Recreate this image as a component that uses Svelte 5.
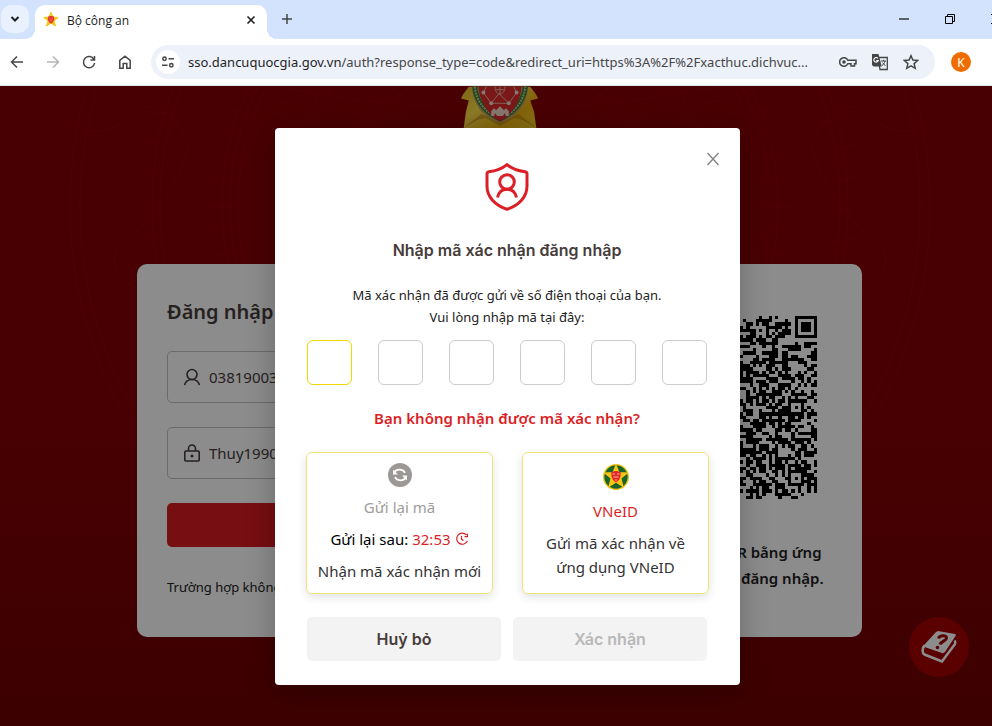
<!--
  LoginVerification — browser window showing the login page with the
  verification code dialog open on top of it.
-->
<script lang="ts">
  const URL_HOST = 'sso.dancuquocgia.gov.vn';
  const URL_PATH =
    '/auth?response_type=code&redirect_uri=https%3A%2F%2Fxacthuc.dichvuc...';
  const QR_SIZE = 57;

  let account = $state('03819003');
  let password = $state('Thuy1990');
  let code = $state(['', '', '', '', '', '']);
  let active = $state(0);

  let complete = $derived(code.every((digit) => digit !== ''));

  const rings = [150, 158, 205, 213, 262, 270, 278, 340, 348, 420, 430];
  const ticks = Array.from({ length: 72 }, (_, i) => i * 5);

  // Concentric square marker: dark border, light ring, dark core
  function marker(x: number, y: number, cx: number, cy: number, core: number) {
    const d = Math.max(Math.abs(x - cx), Math.abs(y - cy));
    if (d > core + 2) return null;
    return d <= core || d === core + 2;
  }

  function buildQr() {
    let seed = 90417;
    let path = '';
    const last = QR_SIZE - 4;
    for (let y = 0; y < QR_SIZE; y++) {
      for (let x = 0; x < QR_SIZE; x++) {
        seed = (seed * 1103515245 + 12345) % 2147483648;
        let on = (seed >> 16) % 100 < 54;
        const corner = (x < 8 || x > QR_SIZE - 9) && (y < 8 || y > QR_SIZE - 9);
        if (corner && !(x > 8 && y > 8)) on = false;
        for (const [cx, cy] of [[3, 3], [last, 3], [3, last]]) {
          on = marker(x, y, cx, cy, 1) ?? on;
        }
        for (const [cx, cy] of [[28, 28], [50, 28], [28, 50], [50, 50], [28, 6], [6, 28]]) {
          on = marker(x, y, cx, cy, 0) ?? on;
        }
        if (on) path += `M${x} ${y}h1v1h-1z`;
      }
    }
    return path;
  }

  const qrPath = buildQr();
</script>

{#snippet star()}
  <path
    d="M12 0.500l2.900 7.200 7.900.500-6.100 5 2 7.800L12 16.800 5.300 21l2-7.800-6.100-5 7.900-.500z"
    fill="#f7c514"
    stroke="#f7c514"
    stroke-width="1.5"
  />
  <path d="M7.500 7c3-1.300 6-1.300 9 0 .8 4.500-.8 8.300-4.500 10.500C8.300 15.300 6.700 11.500 7.500 7z" fill="#e2262b" />
  <path d="M8.500 9h2.500m2 0h2.500M9.500 12h5M12 14v2" stroke="#f6b59a" stroke-width="1" />
{/snippet}

<div class="window">
  <div class="browser">
    <div class="tabs">
      <button type="button" class="tabs__search" aria-label="Search tabs">
        <svg width="12" height="12" viewBox="0 0 12 12"><path d="M2.500 4l3.500 3.500L9.500 4" class="bold" /></svg>
      </button>
      <div class="tab">
        <svg width="16" height="16" viewBox="0 0 24 24">{@render star()}</svg>
        <span class="tab__title">Bộ công an</span>
        <button type="button" aria-label="Close tab">
          <svg width="10" height="10" viewBox="0 0 10 10"><path d="M1.500 1.500l7 7m0-7l-7 7" class="thick" /></svg>
        </button>
      </div>
      <button type="button" class="tabs__new" aria-label="New tab">
        <svg width="12" height="12" viewBox="0 0 12 12"><path d="M6 1v10M1 6h10" class="thin" /></svg>
      </button>
      <div class="controls">
        <button type="button" aria-label="Minimize">
          <svg width="10" height="10" viewBox="0 0 10 10"><path d="M0 5h10" stroke="#5a6270" stroke-width="2" /></svg>
        </button>
        <button type="button" aria-label="Restore">
          <svg width="10" height="10" viewBox="0 0 10 10" fill="none" stroke="#000">
            <path d="M.5 2.500h7v7h-7zM2.500 2.500v-2h7v7h-2" />
          </svg>
        </button>
        <button type="button" aria-label="Close window">
          <svg width="10" height="10" viewBox="0 0 10 10"><path d="M0 0l10 10M10 0L0 10" stroke="#000" /></svg>
        </button>
      </div>
    </div>

    <div class="toolbar">
      <div class="nav">
        <button type="button" aria-label="Back">
          <svg width="16" height="16" viewBox="0 0 16 16"><path d="M14 8H3M8 2.500L2.500 8 8 13.500" class="line" /></svg>
        </button>
        <button type="button" aria-label="Forward" disabled>
          <svg width="16" height="16" viewBox="0 0 16 16"><path d="M2 8h11M8 2.500L13.500 8 8 13.500" class="line" /></svg>
        </button>
        <button type="button" aria-label="Reload">
          <svg width="16" height="16" viewBox="0 0 16 16">
            <path d="M13 5.500A5.600 5.600 0 1 0 13.600 9M13.500 2v4h-4" class="line" />
          </svg>
        </button>
        <button type="button" aria-label="Home">
          <svg width="16" height="16" viewBox="0 0 16 16">
            <path d="M2.800 14.200V6.300L8 2.200l5.200 4.100v7.900H9.800V9.500H6.200v4.700z" class="line" />
          </svg>
        </button>
      </div>
      <div class="address">
        <button type="button" class="address__info" aria-label="Site information">
          <svg width="14" height="14" viewBox="0 0 14 14">
            <path d="M7.500 3.800H13M1 10.200h5.500" class="line" />
            <circle cx="3.500" cy="3.800" r="1.700" class="line" />
            <circle cx="10.300" cy="10.200" r="1.700" class="line" />
          </svg>
        </button>
        <span class="address__url">{URL_HOST}<span>{URL_PATH}</span></span>
        <button type="button" aria-label="Passwords">
          <svg width="18" height="12" viewBox="0 0 18 12">
            <path d="M8.800 4.200A4.300 4.300 0 1 0 8.800 7.800H12V10h3.500V7.800H17V4.200z" class="line" />
            <circle cx="5" cy="6" r="1.800" fill="#444746" />
          </svg>
        </button>
        <button type="button" aria-label="Translate">
          <svg width="18" height="18" viewBox="0 0 18 18">
            <path d="M7 4.500h9.300v12H9z" fill="#edf1fa" stroke="#444746" stroke-width="1.300" />
            <path d="M1 1h6.500l3.300 12.500H2.500L1 12z" fill="#444746" />
            <path d="M7 5.500A2.300 2.300 0 1 0 7.300 7.600H5.300" fill="none" stroke="#fff" stroke-width="1.100" />
            <path d="M10 8h5M12.500 6.800V8M14 8c-.5 2-1.500 3.500-3 4.500M11.500 9.500l3 3.500" fill="none" stroke="#444746" />
          </svg>
        </button>
        <button type="button" aria-label="Bookmark">
          <svg width="16" height="16" viewBox="0 0 16 16">
            <path d="M8 1.700l1.900 4.400 4.800.400-3.600 3.100 1.100 4.700L8 11.800l-4.200 2.500 1.100-4.700L1.300 6.500l4.800-.4z" class="line" />
          </svg>
        </button>
      </div>
      <button type="button" class="avatar">K</button>
    </div>

    <div class="page">
      <svg class="page__pattern" viewBox="0 0 1015 640" preserveAspectRatio="xMidYMin slice">
        <g fill="none" stroke="#ff3b3b" stroke-width="2">
          {#each rings as r}
            <circle cx="500" cy="120" {r} />
          {/each}
          {#each ticks as angle}
            <path d="M500 -170v22M500 -240l6 24" transform="rotate({angle} 500 120)" />
          {/each}
          <path d="M270 0l90 14 90 8M270 14l90 14 90 8M725 0l-90 14-90 8M725 14l-90 14-90 8" />
          <path d="M60 30q40 30 70 0t60 30q-20 60-60 90t20 60M940 30q-40 30-70 0t-60 30q20 60 60 90t-20 60" />
        </g>
      </svg>

      <main class="content">
        <svg class="emblem" width="82" height="60" viewBox="0 0 84 60">
          <defs>
            <linearGradient id="gold" x1="0" y1="0" x2="1" y2="1">
              <stop offset="0" stop-color="#e6b91d" />
              <stop offset=".3" stop-color="#ffdf48" />
              <stop offset=".6" stop-color="#f0b412" />
              <stop offset="1" stop-color="#ffe23c" />
            </linearGradient>
          </defs>
          <path d="M10 0L4 8l-2 4 8 2-3 12-2 15-3 18h80l-3-18-2-15-4-12 8-2-2-4-6-8z" fill="url(#gold)" />
          <path d="M5 42l18-14 19 9 19-9 18 14-14-8-8-2-15 8-15-8-8 2z" fill="#a8780f" opacity=".5" />
          <path d="M13 0c2 19 11 31 29 37 18-6 27-18 29-37z" fill="#b9a45c" />
          <path d="M16 0c2 16 11 26 26 33 15-7 24-17 26-33" fill="none" stroke="#3f7a3a" stroke-width="5" />
          <path d="M16 0c2 16 11 26 26 33 15-7 24-17 26-33" fill="none" stroke="#b9d58d" stroke-width="2" stroke-dasharray="2 1" />
          <path d="M20 0c1 14 8 27 22 36 14-9 21-22 22-36z" fill="#df2b2e" />
          <g stroke="#e8b9a0" fill="none" stroke-width="1">
            <path d="M28 0l-3 6 8 11h18l8-11-3-6M33 17l8-10 10 10" />
            <path d="M37 0c0 10 10 10 10 0M38 3h8M42 0v8" />
          </g>
          <g fill="#f4dccb">
            <circle cx="25" cy="6" r="2" /><circle cx="59" cy="6" r="2" />
            <circle cx="33" cy="17" r="2" /><circle cx="51" cy="17" r="2" />
            <path d="M33 25l3-3 2 2 4-4 4 4 2-2 3 3v5h-3l-1-3-2 3h-6l-2-3-1 3h-3z" />
          </g>
        </svg>

        <section class="login">
          <form class="login__form" onsubmit={(e) => e.preventDefault()}>
            <h1>Đăng nhập</h1>
            <label class="field">
              <svg width="18" height="18" viewBox="0 0 18 18">
                <circle cx="9" cy="6.500" r="5" />
                <path d="M1.500 17c1-3.500 3.500-5.500 7.500-5.500s6.500 2 7.500 5.500" />
              </svg>
              <input type="text" aria-label="Tài khoản" bind:value={account} />
            </label>
            <label class="field">
              <svg width="18" height="18" viewBox="0 0 18 18">
                <rect x="1.800" y="7" width="14.400" height="10" rx="1" />
                <path d="M5.500 7V4.500a3.500 3.500 0 0 1 7 0V7" />
                <circle cx="9" cy="12" r=".7" />
              </svg>
              <input type="text" aria-label="Mật khẩu" bind:value={password} />
            </label>
            <button type="submit" aria-label="Đăng nhập"></button>
            <p>Trường hợp không</p>
          </form>
          <div class="login__qr">
            <svg viewBox="0 0 57 57" shape-rendering="crispEdges"><path d={qrPath} /></svg>
            <p>Bạn quét mã QR bằng ứng<br />dụng VNeID để đăng nhập.</p>
          </div>
        </section>
      </main>

      <button type="button" class="help" aria-label="Hướng dẫn">
        <svg width="38" height="36" viewBox="0 0 38 36">
          <path d="M18 2l17 3c1 0 1 1 .5 2L25 23c-1 1-2 1.500-3 1L6 18.500C4 18 3 17 5 15L16 3z" fill="#fff" />
          <path d="M4.500 16.500C2 19 2 24 4.500 25.500L22 32.500 35 15c1-1.500.5-2-.5-3.500" fill="none" stroke="#fff" stroke-width="2.600" />
          <path d="M18.500 9.500c.5-3 8-4 8-.5 0 3-5 2.500-6.500 6.500" fill="none" stroke="#a40000" stroke-width="3" />
          <circle cx="17.500" cy="18.500" r="1.800" fill="#a40000" />
        </svg>
      </button>

      <div class="overlay">
        <div class="modal" role="dialog" aria-modal="true" aria-labelledby="modal-title">
          <button type="button" class="modal__close" aria-label="Đóng">
            <svg width="14" height="14" viewBox="0 0 14 14"><path d="M1.500 1l11 12m0-12l-11 12" /></svg>
          </button>
          <svg class="modal__shield" width="44" height="48" viewBox="0 0 44 48">
            <path d="M22 1.700C17 5.800 11 8 3.800 8.800 2.600 9 2 9.800 2 11v12c0 11 8 19.500 20 23.300C34 42.500 42 34 42 23V11c0-1.200-.6-2-1.800-2.200C33 8 27 5.800 22 1.700z" />
            <circle cx="22" cy="19" r="7.300" />
            <path d="M12.500 34.500c1.200-5.200 4.500-8.200 9.500-8.200s8.300 3 9.500 8.200" />
          </svg>
          <h2 id="modal-title">Nhập mã xác nhận đăng nhập</h2>
          <p class="modal__text">
            Mã xác nhận đã được gửi về số điện thoại của bạn.<br />Vui lòng nhập mã tại đây:
          </p>
          <div class="otp">
            {#each code as _, i}
              <input
                type="text"
                maxlength="1"
                inputmode="numeric"
                aria-label="Số thứ {i + 1}"
                class:active={active === i}
                bind:value={code[i]}
                onfocus={() => (active = i)}
              />
            {/each}
          </div>
          <p class="modal__question">Bạn không nhận được mã xác nhận?</p>
          <div class="options">
            <button type="button" class="option">
              <svg width="24" height="24" viewBox="0 0 24 24">
                <circle cx="12" cy="12" r="12" fill="#9c9896" />
                <g fill="none" stroke="#fff" stroke-width="1.800">
                  <path d="M6.200 9.500C8.500 5.700 15 5.700 17 9.800M17.800 14.500C15.500 18.300 9 18.300 7 14.200" />
                </g>
                <path d="M5 6.500v5h5zM19 17.500v-5h-5z" fill="#fff" />
              </svg>
              <span class="option__muted">Gửi lại mã</span>
              <span class="option__timer">
                Gửi lại sau: <span>32:53</span>
                <svg width="14" height="14" viewBox="0 0 14 14">
                  <path d="M11.400 2.800A5.600 5.600 0 1 0 12.400 9M12.400 1.800v2.800H9.600M6.500 4v3.300l2 1.200" />
                </svg>
              </span>
              <span>Nhận mã xác nhận mới</span>
            </button>
            <button type="button" class="option">
              <svg width="28" height="28" viewBox="-2 -2 28 28">
                <circle cx="12" cy="12" r="12.300" fill="#17652b" stroke="#f0c419" stroke-width="1.300" />
                {@render star()}
              </svg>
              <span class="option__red">VNeID</span>
              <span>Gửi mã xác nhận về ứng dụng VNeID</span>
            </button>
          </div>
          <div class="actions">
            <button type="button">Huỷ bỏ</button>
            <button type="button" disabled={!complete}>Xác nhận</button>
          </div>
        </div>
      </div>
    </div>
  </div>
</div>

<style>
  :global(body) {
    margin: 0;
    background: #400002;
  }

  .window {
    overflow: hidden;
    font-family: 'Noto Sans', 'Open Sans', sans-serif;
    color: #222;
  }

  .window * {
    box-sizing: border-box;
  }

  /* The window runs past the right edge of the screen */
  .browser {
    display: flex;
    flex-direction: column;
    width: calc(100% + 23px);
    min-height: 100vh;
  }

  button {
    display: flex;
    align-items: center;
    justify-content: center;
    padding: 0;
    border: none;
    background: none;
    font: inherit;
    color: inherit;
  }

  input {
    font: inherit;
    color: inherit;
    outline: none;
  }

  h1,
  h2,
  p {
    margin: 0;
  }

  .tabs {
    display: flex;
    height: 39px;
    padding: 5px 0 0 1px;
    background: #d3e3fd;
  }

  .tabs__search {
    width: 28px;
    height: 28px;
    margin-right: 6px;
    border-radius: 10px;
    background: #e9f1fe;
  }

  .tab {
    position: relative;
    display: flex;
    align-items: center;
    gap: 8px;
    width: 232px;
    padding: 0 11px 4px 8px;
    border-radius: 10px 10px 0 0;
    background: #fff;
    font-family: 'Open Sans', sans-serif;
    font-size: 12px;
  }

  .tab::before,
  .tab::after {
    content: '';
    position: absolute;
    bottom: 0;
    width: 10px;
    height: 10px;
  }

  .tab::before {
    right: 100%;
    background: radial-gradient(circle at 0 0, #d3e3fd 10px, #fff 10px);
  }

  .tab::after {
    left: 100%;
    background: radial-gradient(circle at 100% 0, #d3e3fd 10px, #fff 10px);
  }

  .tab__title {
    flex: 1;
  }

  .tabs__new {
    width: 28px;
    height: 28px;
    margin-left: 6px;
  }

  .controls {
    display: flex;
    margin: 0 -4px 0 auto;
    padding-bottom: 6px;
  }

  .controls button {
    width: 46px;
  }

  .bold,
  .thick,
  .thin,
  .line {
    fill: none;
    stroke: #1f1f1f;
    stroke-width: 2;
  }

  .thick {
    stroke-width: 1.6;
  }

  .thin,
  .line {
    stroke: #444746;
    stroke-width: 1.5;
  }

  .toolbar {
    display: flex;
    align-items: center;
    gap: 12px;
    height: 47px;
    padding: 0 41px 0 3px;
    border-bottom: 1px solid #dfe1e5;
    background: #fff;
  }

  .nav {
    display: flex;
    gap: 8px;
  }

  .nav button {
    width: 28px;
    height: 28px;
  }

  .nav button:disabled {
    opacity: 0.4;
  }

  .address {
    display: flex;
    flex: 1;
    align-items: center;
    gap: 14px;
    min-width: 0;
    height: 34px;
    padding: 0 16px 0 5px;
    border-radius: 17px;
    background: #edf1fa;
    font-size: 13px;
  }

  .address__info {
    width: 24px;
    height: 24px;
    margin-right: -6px;
    border-radius: 50%;
    background: #fff;
  }

  .address button {
    flex: none;
  }

  .address__url {
    flex: 1;
    min-width: 0;
    white-space: nowrap;
    color: #1f1f1f;
  }

  .address__url span {
    color: #474747;
  }

  .avatar {
    width: 20px;
    height: 20px;
    margin: 0 3px 0 4px;
    border-radius: 50%;
    background: #ef6c00;
    color: #fff;
    font-size: 12px;
  }

  .page {
    position: relative;
    flex: 1;
    background: linear-gradient(to bottom, #850005 0%, #850005 50%, #6e0002 100%);
  }

  .page__pattern {
    position: absolute;
    inset: 0;
    width: 100%;
    height: 100%;
    opacity: 0.04;
  }

  .content {
    position: relative;
    display: flex;
    flex-direction: column;
    align-items: center;
    gap: 118px;
    padding: 0 16px 89px 0;
  }

  .login {
    display: grid;
    grid-template-columns: 1fr 214px;
    gap: 60px;
    width: 725px;
    max-width: 100%;
    padding: 30px 30px 40px;
    border-radius: 10px;
    background: #fff;
  }

  .login__form {
    display: flex;
    flex-direction: column;
    gap: 24px;
    color: #463c3b;
  }

  h1 {
    padding-top: 2px;
    font-size: 20px;
    font-weight: 600;
    line-height: 31px;
  }

  .field {
    display: flex;
    align-items: center;
    gap: 8px;
    height: 52px;
    padding: 0 15px;
    border: 1px solid #c4c4c4;
    border-radius: 5px;
    font-size: 15px;
  }

  .field svg {
    fill: none;
    stroke: #463c3b;
    stroke-width: 1.6;
  }

  .field input {
    flex: 1;
    min-width: 0;
    padding: 0;
    border: none;
    background: none;
  }

  .login__form button {
    height: 44px;
    border-radius: 5px;
    background: #d91a21;
    color: #fff;
  }

  .login__form p {
    padding-top: 6px;
    font-size: 13px;
    line-height: 20px;
    color: #222;
  }

  .login__qr {
    display: flex;
    flex-direction: column;
    align-items: center;
    gap: 40px;
    padding-top: 22px;
  }

  .login__qr svg {
    width: 183px;
  }

  .login__qr p {
    font-size: 15px;
    font-weight: 600;
    line-height: 26px;
    text-align: center;
    white-space: nowrap;
  }

  .help {
    position: absolute;
    right: 46px;
    bottom: 49px;
    width: 60px;
    height: 60px;
    border-radius: 50%;
    background: #a40000;
  }

  .overlay {
    position: absolute;
    inset: 0;
    display: flex;
    align-items: flex-start;
    justify-content: center;
    padding-top: 42px;
    background: rgba(0, 0, 0, 0.45);
  }

  .modal {
    position: relative;
    display: flex;
    flex-direction: column;
    align-items: center;
    width: 465px;
    padding: 35px 33px 24px 32px;
    border-radius: 4px;
    background: #fff;
    box-shadow: 0 6px 30px rgba(0, 0, 0, 0.25);
  }

  .modal__close {
    position: absolute;
    top: 24px;
    right: 20px;
  }

  .modal__close svg {
    fill: none;
    stroke: #808080;
    stroke-width: 1.3;
  }

  .modal__shield {
    fill: none;
    stroke: #dc1f26;
    stroke-width: 3;
  }

  h2 {
    margin-top: 27px;
    font-family: Inter, sans-serif;
    font-size: 16px;
    font-weight: 600;
    line-height: 24px;
    color: #463c3b;
  }

  .modal__text {
    margin-top: 22px;
    font-size: 13px;
    line-height: 22px;
    text-align: center;
  }

  .otp {
    display: flex;
    justify-content: space-between;
    align-self: stretch;
    margin-top: 12px;
  }

  .otp input {
    width: 45px;
    height: 45px;
    padding: 0;
    border: 1px solid #ccc;
    border-radius: 6px;
    text-align: center;
  }

  .otp input.active {
    border-color: #f0d800;
  }

  .modal__question {
    margin-top: 21px;
    font-size: 15px;
    font-weight: 600;
    line-height: 24px;
    color: #dc1f26;
  }

  .options {
    display: grid;
    grid-template-columns: 1fr 1fr;
    gap: 29px;
    align-self: stretch;
    margin: 22px -2px 0 -1px;
  }

  .option {
    flex-direction: column;
    justify-content: flex-start;
    gap: 8px;
    padding: 10px;
    border: 1px solid #f0e478;
    border-radius: 6px;
    box-shadow: 0 3px 10px rgba(0, 0, 0, 0.12);
    font-size: 15px;
    line-height: 24px;
    white-space: nowrap;
    color: #333;
  }

  .option:last-child {
    white-space: normal;
  }

  .option__muted {
    color: #a09c9b;
  }

  .option__red,
  .option__timer span {
    color: #dc1f26;
  }

  .option__timer {
    display: flex;
    align-items: center;
    gap: 4px;
    color: #000;
  }

  .option__timer svg {
    fill: none;
    stroke: #dc1f26;
    stroke-width: 1.2;
  }

  .actions {
    display: grid;
    grid-template-columns: 1fr 1fr;
    gap: 12px;
    align-self: stretch;
    margin-top: 23px;
  }

  .actions button {
    height: 44px;
    border-radius: 5px;
    background: #f3f3f3;
    font-family: Inter, sans-serif;
    font-size: 16px;
    font-weight: 600;
    color: #463c3b;
  }

  .actions button:disabled {
    color: #b8b8b8;
  }
</style>
